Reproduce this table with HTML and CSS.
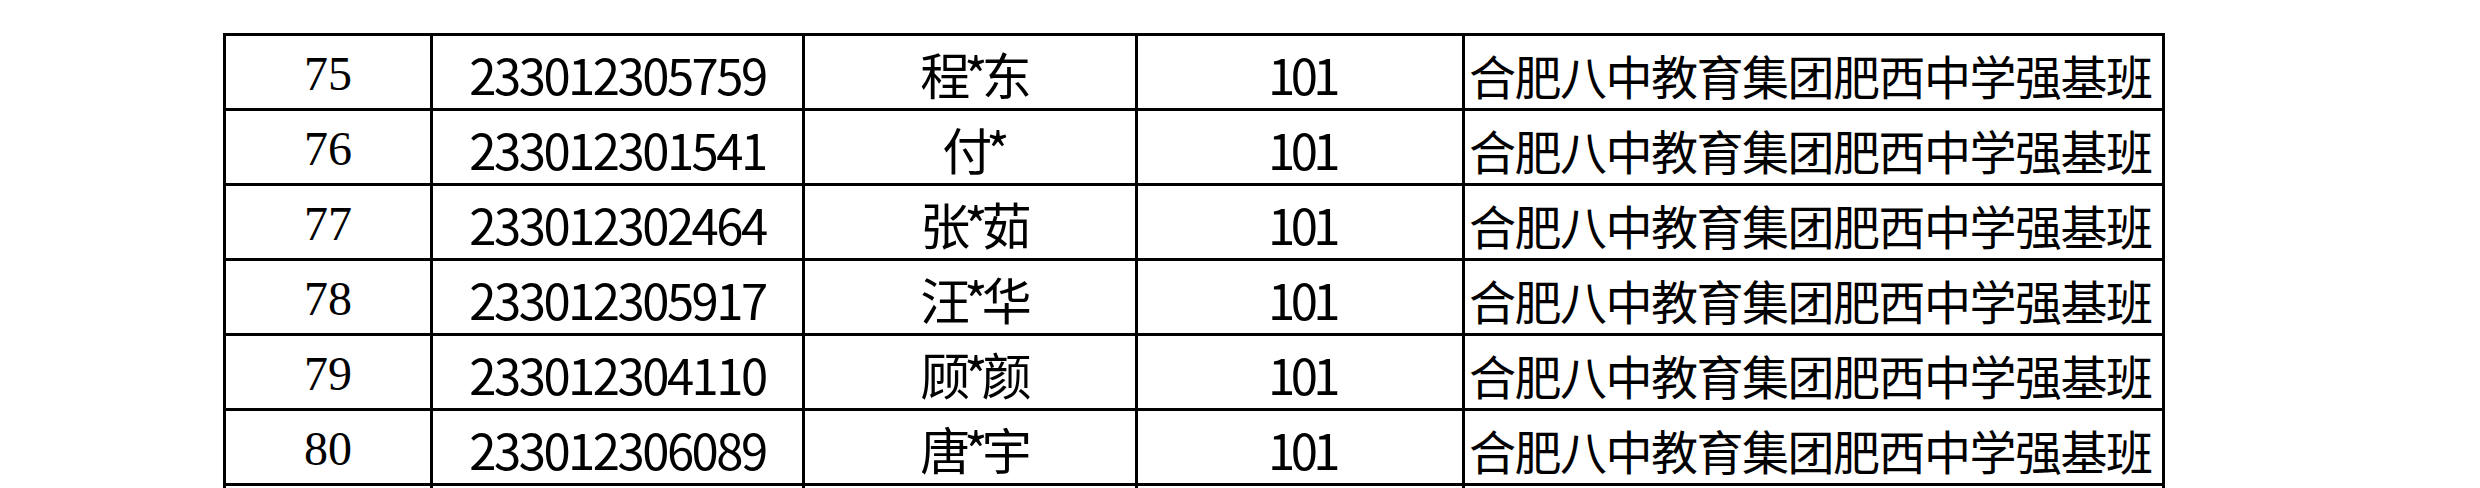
FILE: index.html
```html
<!DOCTYPE html>
<html lang="zh-CN">
<head>
<meta charset="utf-8">
<title>名单</title>
<link rel="stylesheet" href="styles.css">
</head>
<body>
<table class="list">
  <colgroup>
    <col class="c-no">
    <col class="c-id">
    <col class="c-name">
    <col class="c-score">
    <col class="c-school">
  </colgroup>
  <tbody>
    <tr><td class="no">75</td><td class="num">233012305759</td><td class="name">程*东</td><td class="num score">101</td><td class="school">合肥八中教育集团肥西中学强基班</td></tr>
    <tr><td class="no">76</td><td class="num">233012301541</td><td class="name">付*</td><td class="num score">101</td><td class="school">合肥八中教育集团肥西中学强基班</td></tr>
    <tr><td class="no">77</td><td class="num">233012302464</td><td class="name">张*茹</td><td class="num score">101</td><td class="school">合肥八中教育集团肥西中学强基班</td></tr>
    <tr><td class="no">78</td><td class="num">233012305917</td><td class="name">汪*华</td><td class="num score">101</td><td class="school">合肥八中教育集团肥西中学强基班</td></tr>
    <tr><td class="no">79</td><td class="num">233012304110</td><td class="name">顾*颜</td><td class="num score">101</td><td class="school">合肥八中教育集团肥西中学强基班</td></tr>
    <tr><td class="no">80</td><td class="num">233012306089</td><td class="name">唐*宇</td><td class="num score">101</td><td class="school">合肥八中教育集团肥西中学强基班</td></tr>
    <tr class="cut"><td class="no"></td><td class="num"></td><td class="name"></td><td class="num"></td><td class="school"></td></tr>
  </tbody>
</table>
</body>
</html>
```
FILE: styles.css
```css
html, body {
  margin: 0;
  padding: 0;
  background: #ffffff;
  overflow: hidden;
}
body {
  width: 2480px;
  height: 488px;
  color: #000000;
}
.list {
  border-collapse: collapse;
  table-layout: fixed;
  width: 1942px;
  margin: 33px 0 0 223px;
}
.c-no { width: 207px; }
.c-id { width: 372px; }
.c-name { width: 333px; }
.c-score { width: 327px; }
.c-school { width: 700px; }
.list td {
  border: 3px solid #000000;
  height: 68px;
  padding: 4px 0 0 0;
  text-align: center;
  vertical-align: middle;
  white-space: nowrap;
  overflow: hidden;
  line-height: 1;
}
.list td.no {
  font-family: "Liberation Serif", "Noto Sans CJK SC", serif;
  font-size: 48px;
}
.list td.num {
  font-family: "Noto Sans CJK SC", "Noto Sans", sans-serif;
  font-size: 49px;
  letter-spacing: -2.5px;
  padding-top: 2px;
}
.list td.score {
  letter-spacing: -4.5px;
  text-indent: 4px;
}
.list td.name {
  font-family: "Noto Sans CJK SC", "Noto Sans", sans-serif;
  font-size: 50px;
  letter-spacing: -6px;
  text-indent: 6px;
  padding-top: 2px;
}
.list td.school {
  font-family: "Noto Sans CJK SC", sans-serif;
  font-size: 47px;
  letter-spacing: -1.5px;
  text-align: left;
  padding-left: 4px;
}
```
